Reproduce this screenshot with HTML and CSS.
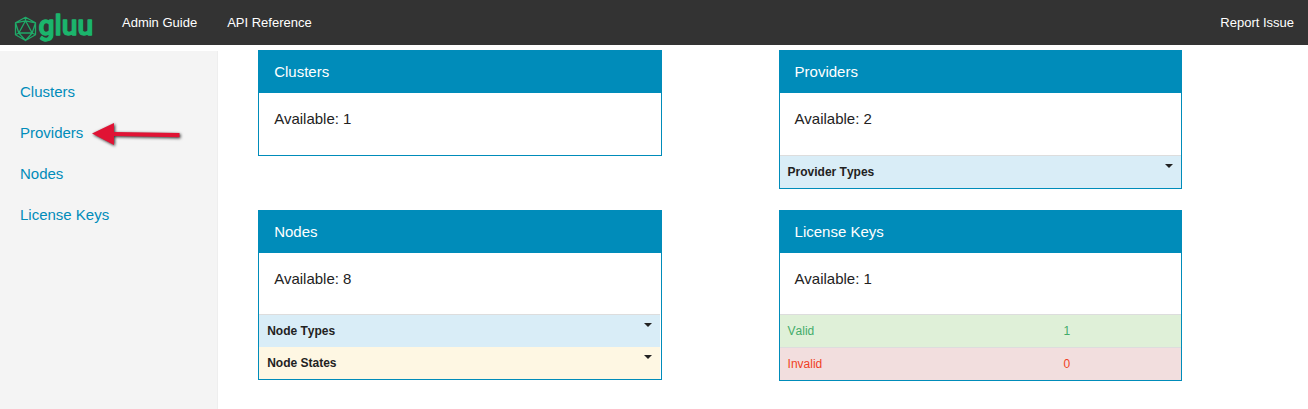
FILE: index.html
```html
<!DOCTYPE html>
<html lang="en">
<head>
<meta charset="utf-8">
<title>Gluu Cluster Manager</title>
<link rel="stylesheet" href="styles.css">
</head>
<body>
<header class="navbar">
  <a class="brand">
    <svg class="logo" width="84" height="45" viewBox="14 0 84 45">
      <path class="gem" d="M25.5 17.3 35.5 22.8V34.8L25.5 40.5 15.5 34.8V22.8ZM25.5 20.8 32.2 33H18.8ZM25.5 17.3V20.8M15.5 22.8 25.5 20.8 35.5 22.8 32.2 33 35.5 34.8M15.5 34.8 18.8 33 15.5 22.8M18.8 33 25.5 40.5 32.2 33"/>
      <text class="wordmark" x="38.6" y="35.3" textLength="54.5" lengthAdjust="spacingAndGlyphs">gluu</text>
    </svg>
  </a>
  <nav class="links"><a>Admin Guide</a><a>API Reference</a></nav>
  <a class="report">Report Issue</a>
</header>
<div class="layout">
  <aside class="sidebar">
    <a>Clusters</a><a class="marked">Providers
      <svg class="arrow" width="94" height="30" viewBox="90 119 94 30"><path d="M92 133.5 114 123V131.9L179.5 133V137.2L114 136V145Z"/></svg></a><a>Nodes</a><a>License Keys</a>
  </aside>
  <main class="cards">
    <section class="card left">
      <h2>Clusters</h2>
      <p>Available: 1</p>
    </section>
    <section class="card right tall">
      <h2>Providers</h2>
      <p>Available: 2</p>
      <div class="row info ruled">Provider Types<i class="caret"></i></div>
    </section>
    <section class="card left inset">
      <h2>Nodes</h2>
      <p>Available: 8</p>
      <div class="row info ruled">Node Types<i class="caret"></i></div>
      <div class="row warning">Node States<i class="caret"></i></div>
    </section>
    <section class="card right">
      <h2>License Keys</h2>
      <p>Available: 1</p>
      <div class="row success ruled"><span>Valid</span><span>1</span></div>
      <div class="row danger ruled"><span>Invalid</span><span>0</span></div>
    </section>
  </main>
</div>
</body>
</html>
```
FILE: styles.css
```css
* { box-sizing: border-box; }
body {
  margin: 0;
  height: 409px;
  overflow: hidden;
  background: #fff;
  color: #222;
  font: 15px/20px "Liberation Sans", Arial, sans-serif;
}
.navbar {
  display: flex;
  height: 45px;
  padding: 0 14px;
  background: #333;
  color: #fff;
  font-size: 13px;
  line-height: 45px;
}
.brand { width: 108px; }
.logo { display: block; overflow: visible; }
.gem { fill: none; stroke: #1fa968; stroke-width: 1.3; stroke-linejoin: round; }
.wordmark {
  fill: #1bb56c;
  stroke: #1bb56c;
  stroke-width: 1.3;
  stroke-linejoin: round;
  font: 500 28px/1 Roboto, sans-serif;
}
.links { display: flex; flex: 1; gap: 30px; }
.layout { display: flex; }
.sidebar {
  display: flex;
  flex-direction: column;
  gap: 21px;
  width: 218px;
  height: 358px;
  margin-top: 6px;
  padding: 31px 20px;
  border-right: 1px solid #eee;
  background: #f4f4f4;
  color: #008cba;
}
.marked { position: relative; }
.arrow {
  position: absolute;
  left: 70px;
  top: -4px;
  fill: #e01334;
  filter: drop-shadow(1px 1.5px 1.5px rgba(0, 0, 0, .8));
}
.cards {
  display: grid;
  grid-template-columns: 404px 403px;
  column-gap: 117px;
  row-gap: 21px;
  align-items: start;
  align-content: start;
  padding: 5px 0 0 40px;
}
.card { --shift: 0.2px; border: 1px solid #008cba; background: #fff; }
.card.right { --shift: -0.4px; }
.card h2 {
  height: 42px;
  margin: 0;
  padding: 11px calc(15px + var(--shift));
  background: #008cba;
  color: #fff;
  font-size: 15px;
  font-weight: 400;
  line-height: 20px;
}
.card p { height: 61px; margin: 0; padding: 16px calc(15px + var(--shift)) 0; }
.card.tall p { height: 62px; }
.card:first-child { height: 106px; }
.row {
  display: flex;
  justify-content: space-between;
  height: 32px;
  padding: 0 8px 0 calc(8px + var(--shift));
  font-size: 12px;
  font-weight: 700;
  font-kerning: none;
  line-height: 32px;
}
.row.ruled { height: 33px; border-top: 1px solid #ddd; }
.inset .row { margin-right: 1px; }
.info { background: #d9edf7; }
.warning { background: #fef7e3; }
.success, .danger { display: grid; grid-template-columns: 276px 1fr; font-weight: 400; }
.success { background: #dff0d8; color: #43ac6a; }
.danger { background: #f2dede; color: #f04124; }
.caret {
  width: 8px;
  height: 4px;
  margin-top: 8px;
  border: 4px solid transparent;
  border-top-color: #222;
  border-bottom: 0;
}
```
